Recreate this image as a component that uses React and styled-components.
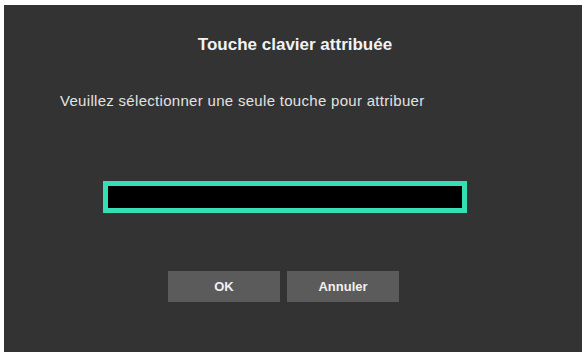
import React from 'react'
import styled, { createGlobalStyle } from 'styled-components'

const GlobalStyle = createGlobalStyle`
  body {
    margin: 0;
    background: #ffffff;
    font-family: "Liberation Sans", Arial, sans-serif;
  }
`

const Dialog = styled.div`
  box-sizing: border-box;
  width: 578px;
  height: 347px;
  margin: 5px 0 0 4px;
  background: #333333;
  display: flex;
  flex-direction: column;
  padding: 29px 0 0 56px;
`

const Title = styled.div`
  font-size: 17px;
  line-height: 21px;
  font-weight: bold;
  color: #f2f2f2;
  text-align: center;
  padding-right: 52px;
`

const Message = styled.div`
  margin-top: 38px;
  font-size: 15px;
  line-height: 16px;
  letter-spacing: 0.3px;
  color: #e2e2e2;
`

const KeyField = styled.input`
  box-sizing: border-box;
  margin: 72px 0 0 43px;
  width: 364px;
  height: 32px;
  background: #000000;
  border: 5px solid #34dfb4;
  outline: none;
  color: #ffffff;
  padding: 0 6px;
`

const ButtonRow = styled.div`
  display: flex;
  gap: 7px;
  margin: 58px 0 0 108px;
`

const Button = styled.button`
  width: 112px;
  height: 31px;
  border: none;
  background: #5b5b5b;
  color: #f0f0f0;
  font-family: "Liberation Sans", Arial, sans-serif;
  font-size: 13px;
  font-weight: bold;
  cursor: pointer;
`

export default function App() {
  return (
    <>
      <GlobalStyle />
      <Dialog>
        <Title>Touche clavier attribuée</Title>
        <Message>Veuillez sélectionner une seule touche pour attribuer</Message>
        <KeyField readOnly />
        <ButtonRow>
          <Button>OK</Button>
          <Button>Annuler</Button>
        </ButtonRow>
      </Dialog>
    </>
  )
}
